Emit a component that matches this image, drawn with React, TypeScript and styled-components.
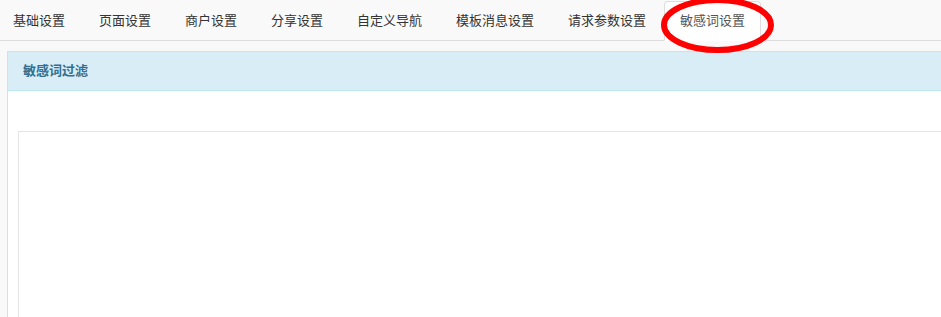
import React from "react";
import styled, { createGlobalStyle } from "styled-components";

const Global = createGlobalStyle`
  html, body { margin: 0; padding: 0; background: #f9f9f9; }
  body {
    font-family: "Liberation Sans", "Noto Sans CJK SC", sans-serif;
    font-size: 13px;
    color: #333;
    overflow: hidden;
  }
`;

const Page = styled.div`
  position: relative;
  width: 941px;
  height: 317px;
  overflow: hidden;
  background: #f9f9f9;
`;

const Tabs = styled.ul`
  list-style: none;
  margin: 0 0 0 -3px;
  padding: 1px 0 0 0;
  display: flex;
  border-bottom: 1px solid #dddddd;
  height: 39px;
`;

const Tab = styled.li<{ $active?: boolean }>`
  margin-right: 2px;
  margin-bottom: -1px;
  padding: 10px 15px;
  line-height: 17px;
  border: 1px solid ${(p) => (p.$active ? "#dddddd" : "transparent")};
  border-bottom-color: transparent;
  border-radius: 4px 4px 0 0;
  background: ${(p) => (p.$active ? "#ffffff" : "transparent")};
  color: ${(p) => (p.$active ? "#555555" : "#333333")};
  white-space: nowrap;
`;

const Panel = styled.section`
  margin: 10px 0 0 7px;
  width: 1000px;
  border: 1px solid #dddddd;
  background: #ffffff;
`;

const PanelHeading = styled.div`
  padding: 10px 15px;
  line-height: 18px;
  background: #d9edf7;
  border-bottom: 1px solid #bce8f1;
  color: #31708f;
  font-weight: bold;
`;

const PanelBody = styled.div`
  padding: 40px 0 0 10px;
  height: 300px;
`;

const Editor = styled.div`
  border: 1px solid #e5e5e5;
  height: 400px;
  background: #ffffff;
`;

const Annotation = styled.svg`
  position: absolute;
  left: 655px;
  top: -6px;
  pointer-events: none;
`;

const tabs = [
  "基础设置",
  "页面设置",
  "商户设置",
  "分享设置",
  "自定义导航",
  "模板消息设置",
  "请求参数设置",
  "敏感词设置",
];

export default function App() {
  return (
    <Page>
      <Global />
      <Tabs>
        {tabs.map((t, i) => (
          <Tab key={t} $active={i === tabs.length - 1}>
            {t}
          </Tab>
        ))}
      </Tabs>
      <Panel>
        <PanelHeading>敏感词过滤</PanelHeading>
        <PanelBody>
          <Editor />
        </PanelBody>
      </Panel>
      <Annotation width="126" height="64" viewBox="0 0 126 64">
        <ellipse cx="62.5" cy="31" rx="53.5" ry="25" fill="none" stroke="#ff0000" strokeWidth="6" />
      </Annotation>
    </Page>
  );
}
